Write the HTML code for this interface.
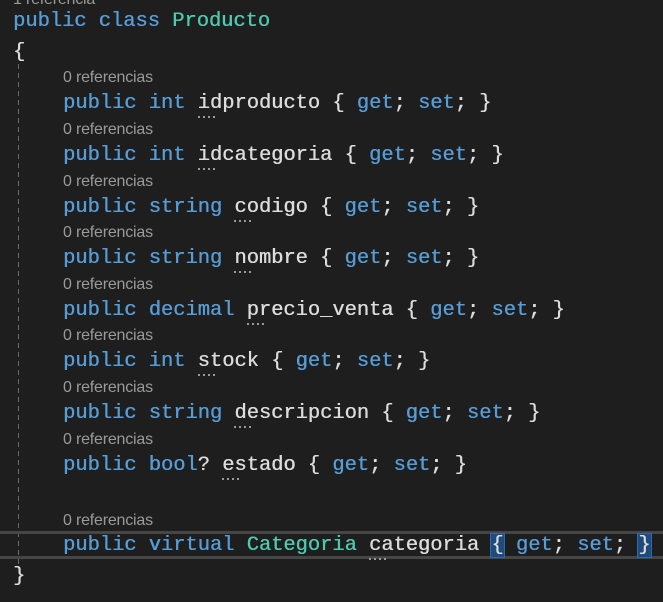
<!DOCTYPE html>
<html><head><meta charset="utf-8"><style>
body{margin:0;background:#1e1e1e;width:663px;height:602px;overflow:hidden;position:relative}
.c{position:absolute;font-family:"Liberation Mono",monospace;font-size:20.4px;line-height:24px;color:#dcdcdc;white-space:pre;text-shadow:0.4px 0 0 currentColor}
.r{position:absolute;left:63px;font-family:"Liberation Sans",sans-serif;font-size:16px;line-height:16px;color:#9a9a9a;white-space:pre;letter-spacing:-0.2px}
.k{color:#569cd6}.t{color:#4ec9b0}
.d{position:relative}
.d::after{content:"";position:absolute;left:0;bottom:-3px;width:18px;height:2px;background:repeating-linear-gradient(90deg,#9a9a9a 0 2px,transparent 2px 5px)}
.guide{position:absolute;left:18px;top:64px;width:1px;height:500px;background:repeating-linear-gradient(180deg,#6a6a6a 0 5px,transparent 5px 9px)}
.hl{position:absolute;left:0;width:663px;height:3px;background:#464646}
.b{background:#1f4a7a;outline:1px solid #2b6cb0}
</style></head><body>
<div class="r" style="top:-8px;left:13px">1 referencia</div>
<div class="c" style="top:10px;left:13px"><span class="k">public</span> <span class="k">class</span> <span class="t">Producto</span></div>
<div class="c" style="top:41px;left:13px">{</div>
<div class="guide"></div>

<div class="r" style="top:70px">0 referencias</div>
<div class="c" style="top:92px;left:63px"><span class="k">public</span> <span class="k">int</span> <span class="d">idproducto</span> { <span class="k">get</span>; <span class="k">set</span>; }</div>
<div class="r" style="top:122px">0 referencias</div>
<div class="c" style="top:144px;left:63px"><span class="k">public</span> <span class="k">int</span> <span class="d">idcategoria</span> { <span class="k">get</span>; <span class="k">set</span>; }</div>
<div class="r" style="top:174px">0 referencias</div>
<div class="c" style="top:196px;left:63px"><span class="k">public</span> <span class="k">string</span> <span class="d">codigo</span> { <span class="k">get</span>; <span class="k">set</span>; }</div>
<div class="r" style="top:225px">0 referencias</div>
<div class="c" style="top:247px;left:63px"><span class="k">public</span> <span class="k">string</span> <span class="d">nombre</span> { <span class="k">get</span>; <span class="k">set</span>; }</div>
<div class="r" style="top:277px">0 referencias</div>
<div class="c" style="top:299px;left:63px"><span class="k">public</span> <span class="k">decimal</span> <span class="d">precio_venta</span> { <span class="k">get</span>; <span class="k">set</span>; }</div>
<div class="r" style="top:328px">0 referencias</div>
<div class="c" style="top:350px;left:63px"><span class="k">public</span> <span class="k">int</span> <span class="d">stock</span> { <span class="k">get</span>; <span class="k">set</span>; }</div>
<div class="r" style="top:380px">0 referencias</div>
<div class="c" style="top:402px;left:63px"><span class="k">public</span> <span class="k">string</span> <span class="d">descripcion</span> { <span class="k">get</span>; <span class="k">set</span>; }</div>
<div class="r" style="top:432px">0 referencias</div>
<div class="c" style="top:454px;left:63px"><span class="k">public</span> <span class="k">bool</span>? <span class="d">estado</span> { <span class="k">get</span>; <span class="k">set</span>; }</div>

<div class="r" style="top:513px">0 referencias</div>
<div class="hl" style="top:531px"></div>
<div class="hl" style="top:556px"></div>
<div class="c" style="top:534px;left:63px"><span class="k">public</span> <span class="k">virtual</span> <span class="t">Categoria</span> <span class="d">categoria</span> <span class="b">{</span> <span class="k">get</span>; <span class="k">set</span>; <span class="b">}</span></div>
<div class="c" style="top:565px;left:13px">}</div>
</body></html>
